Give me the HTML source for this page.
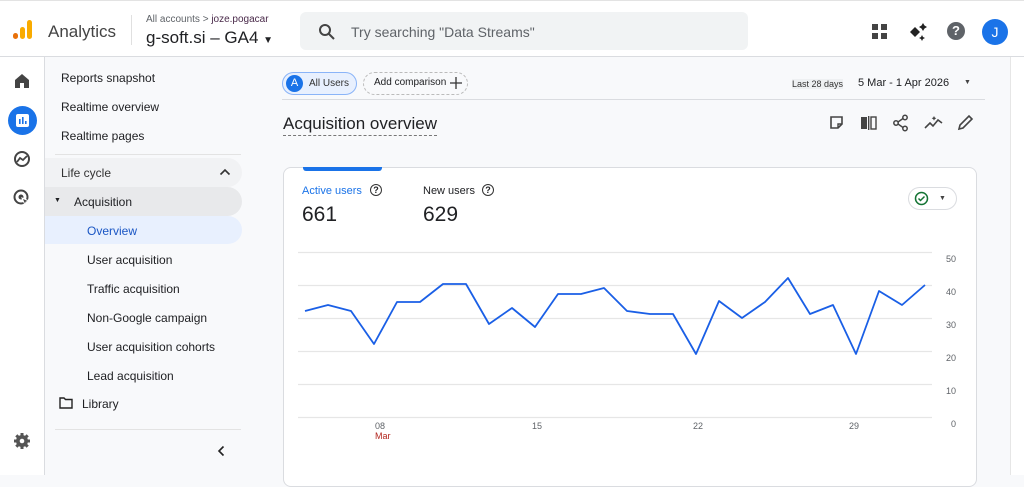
<!DOCTYPE html>
<html><head><meta charset="utf-8"><style>
*{box-sizing:border-box;margin:0;padding:0}
body{width:1024px;height:475px;overflow:hidden;background:#f8f9fb;font-family:"Liberation Sans",Arial,sans-serif;color:#202124;position:relative}
.abs{position:absolute}
#top{left:0;top:0;width:1024px;height:57px;background:#fff;border-top:1px solid #e3e3e3;border-bottom:1px solid #dadce0}
#rail{left:0;top:57px;width:45px;height:418px;background:#fff;border-right:1px solid #dadce0}
.nav{position:absolute;font-size:12px;color:#202124}
.sub{left:87px}
</style></head><body>
<div id="top" class="abs">
  <svg class="abs" style="left:12px;top:18px" width="22" height="24"><rect x="1" y="14" width="5" height="6" rx="2.5" fill="#e8710a"/><rect x="8" y="8" width="5" height="12" rx="2.5" fill="#f9ab00"/><rect x="15" y="1" width="5" height="19" rx="2.5" fill="#f9ab00"/></svg>
  <div class="abs" style="left:48px;top:21px;font-size:17px;color:#444">Analytics</div>
  <div class="abs" style="left:131px;top:14px;width:1px;height:30px;background:#e0e0e0"></div>
  <div class="abs" style="left:146px;top:13px;font-size:10px;color:#5f6368">All accounts &gt; <span style="color:#4a2a4a">joze.pogacar</span></div>
  <div class="abs" style="left:146px;top:27px;font-size:17px;color:#202124">g-soft.si – GA4 <span style="font-size:10px">▼</span></div>
  <div class="abs" style="left:300px;top:11px;width:448px;height:38px;background:#f1f3f4;border-radius:6px"></div>
  <svg class="abs" style="left:318px;top:22px" width="18" height="18"><circle cx="7" cy="7" r="5" fill="none" stroke="#444" stroke-width="2"/><path d="M11 11l5 5" stroke="#444" stroke-width="2"/></svg>
  <div class="abs" style="left:351px;top:23px;font-size:14px;color:#5f6368">Try searching "Data Streams"</div>
  <svg class="abs" style="left:872px;top:23px" width="16" height="16"><rect x="0" y="0" width="6" height="6" fill="#444"/><rect x="9" y="0" width="6" height="6" fill="#444"/><rect x="0" y="9" width="6" height="6" fill="#444"/><rect x="9" y="9" width="6" height="6" fill="#444"/></svg>
  <svg class="abs" style="left:908px;top:21px" width="20" height="20"><path d="M7 5l5 5-5 5-5-5z" fill="#222"/><path d="M15 1l1.5 2.5L19 5l-2.5 1.5L15 9l-1.5-2.5L11 5l2.5-1.5z" fill="#222"/><path d="M14 13l1 2 2 1-2 1-1 2-1-2-2-1 2-1z" fill="#222"/></svg>
  <div class="abs" style="left:947px;top:21px;width:18px;height:18px;border-radius:50%;background:#5f6368;color:#fff;font-size:13px;font-weight:bold;text-align:center;line-height:18px">?</div>
  <div class="abs" style="left:982px;top:18px;width:26px;height:26px;border-radius:50%;background:#1a73e8;color:#fff;font-size:14px;text-align:center;line-height:26px">J</div>
</div>
<div id="rail" class="abs">
  <svg class="abs" style="left:14px;top:16px" width="16" height="16"><path d="M1 7L8 1l7 6v8h-5v-5H6v5H1z" fill="#444"/></svg>
  <div class="abs" style="left:8px;top:49px;width:29px;height:29px;border-radius:50%;background:#1a73e8"></div>
  <svg class="abs" style="left:15px;top:56px" width="15" height="15"><rect x="1" y="1" width="13" height="13" rx="2" fill="#fff"/><rect x="4" y="6" width="1.6" height="5" fill="#1a73e8"/><rect x="7" y="4" width="1.6" height="7" fill="#1a73e8"/><rect x="10" y="8" width="1.6" height="3" fill="#1a73e8"/></svg>
  <svg class="abs" style="left:13px;top:93px" width="18" height="18"><circle cx="9" cy="9" r="7" fill="none" stroke="#444" stroke-width="2"/><path d="M4 12l3-4 3 2 4-4" fill="none" stroke="#444" stroke-width="1.8"/></svg>
  <svg class="abs" style="left:13px;top:132px" width="18" height="18"><circle cx="8" cy="8" r="6.5" fill="none" stroke="#444" stroke-width="2"/><circle cx="8" cy="8" r="2.5" fill="#444"/><path d="M9 9l7 3-3 1-1 3z" fill="#444" stroke="#fff" stroke-width="1"/></svg>
  <svg class="abs" style="left:13px;top:375px" width="18" height="18"><circle cx="9" cy="9" r="6" fill="#555"/><g stroke="#555" stroke-width="3"><path d="M9 1v16M1 9h16M3.3 3.3l11.4 11.4M14.7 3.3L3.3 14.7"/></g><circle cx="9" cy="9" r="2.3" fill="#fff"/></svg>
</div>
<div class="nav" style="left:61px;top:71px">Reports snapshot</div>
<div class="nav" style="left:61px;top:100px">Realtime overview</div>
<div class="nav" style="left:61px;top:129px">Realtime pages</div>
<div class="abs" style="left:55px;top:154px;width:186px;height:1px;background:#e3e3e3"></div>
<div class="abs" style="left:45px;top:158px;width:197px;height:29px;background:#f1f2f4;border-radius:0 15px 15px 0"></div>
<div class="nav" style="left:61px;top:166px;color:#333">Life cycle</div>
<svg class="abs" style="left:219px;top:168px" width="12" height="8"><path d="M1.5 6.5L6 2l4.5 4.5" fill="none" stroke="#333" stroke-width="1.6"/></svg>
<div class="abs" style="left:45px;top:187px;width:197px;height:29px;background:#e8e9eb;border-radius:0 15px 15px 0"></div>
<div class="nav" style="left:54px;top:197px;font-size:7px">▼</div>
<div class="nav" style="left:74px;top:195px">Acquisition</div>
<div class="abs" style="left:45px;top:216px;width:197px;height:28px;background:#e8f0fe;border-radius:0 15px 15px 0"></div>
<div class="nav sub" style="top:224px;color:#1a56c4">Overview</div>
<div class="nav sub" style="top:253px">User acquisition</div>
<div class="nav sub" style="top:282px">Traffic acquisition</div>
<div class="nav sub" style="top:311px">Non-Google campaign</div>
<div class="nav sub" style="top:340px">User acquisition cohorts</div>
<div class="nav sub" style="top:369px">Lead acquisition</div>
<svg class="abs" style="left:59px;top:397px" width="14" height="12"><path d="M1 1h4l1.5 1.5H13V11H1z" fill="none" stroke="#222" stroke-width="1.4"/></svg>
<div class="nav" style="left:82px;top:397px">Library</div>
<div class="abs" style="left:55px;top:429px;width:186px;height:1px;background:#e3e3e3"></div>
<svg class="abs" style="left:217px;top:445px" width="8" height="12"><path d="M6.5 1.5L2 6l4.5 4.5" fill="none" stroke="#222" stroke-width="1.6"/></svg>
<div class="abs" style="left:282px;top:72px;width:75px;height:23px;border:1px solid #8ab4f8;background:#e8f0fe;border-radius:12px"></div>
<div class="abs" style="left:286px;top:75px;width:17px;height:17px;border-radius:50%;background:#1a73e8;color:#fff;font-size:11px;text-align:center;line-height:17px">A</div>
<div class="abs" style="left:309px;top:78px;font-size:10px;color:#333">All Users</div>
<div class="abs" style="left:363px;top:72px;width:105px;height:23px;border:1px dashed #bbb;border-radius:12px"></div>
<div class="abs" style="left:374px;top:77px;font-size:10px;color:#202124">Add comparison</div>
<svg class="abs" style="left:450px;top:77px" width="12" height="12"><path d="M6 0v12M0 6h12" stroke="#333" stroke-width="1.3"/></svg>
<div class="abs" style="left:792px;top:79px;font-size:9px;color:#333;background:#eef0f2">Last 28 days</div>
<div class="abs" style="left:858px;top:77px;font-size:11px;color:#202124">5 Mar - 1 Apr 2026</div>
<div class="abs" style="left:964px;top:79px;font-size:7px;color:#444">▼</div>
<div class="abs" style="left:282px;top:99px;width:703px;height:1px;background:#dadce0"></div>
<div class="abs" style="left:283px;top:114px;font-size:17px;color:#202124;border-bottom:1px dashed #777;padding-bottom:1px">Acquisition overview</div>
<svg class="abs" style="left:828px;top:114px" width="18" height="18"><path d="M3 3h11v7l-4 4H3z" fill="none" stroke="#444" stroke-width="1.6"/><path d="M10 14v-4h4" fill="none" stroke="#444" stroke-width="1.4"/></svg>
<svg class="abs" style="left:860px;top:114px" width="18" height="18"><rect x="1" y="3" width="6" height="12" fill="#444"/><rect x="8" y="2" width="1.4" height="14" fill="#444"/><rect x="11" y="3" width="5" height="12" fill="none" stroke="#444" stroke-width="1.4"/></svg>
<svg class="abs" style="left:892px;top:114px" width="18" height="18"><circle cx="13" cy="3.5" r="2.2" fill="none" stroke="#444" stroke-width="1.5"/><circle cx="4" cy="9" r="2.2" fill="none" stroke="#444" stroke-width="1.5"/><circle cx="13" cy="14.5" r="2.2" fill="none" stroke="#444" stroke-width="1.5"/><path d="M6 8l5-3.5M6 10l5 3.5" stroke="#444" stroke-width="1.4"/></svg>
<svg class="abs" style="left:924px;top:114px" width="20" height="18"><path d="M1 14l5-5 3 3 5-6 4 3" fill="none" stroke="#444" stroke-width="1.6"/><path d="M10 2l.8 1.5 1.5.8-1.5.8L10 6.6l-.8-1.5-1.5-.8 1.5-.8z" fill="#444"/></svg>
<svg class="abs" style="left:956px;top:114px" width="18" height="18"><path d="M3 15l1-4 9-9 3 3-9 9z" fill="none" stroke="#444" stroke-width="1.6"/></svg>
<div class="abs" style="left:283px;top:167px;width:694px;height:320px;background:#fff;border:1px solid #dadce0;border-radius:8px"></div>
<div class="abs" style="left:303px;top:167px;width:79px;height:4px;background:#1a73e8;border-radius:0 0 3px 3px"></div>
<div class="abs" style="left:302px;top:185px;font-size:11px;color:#1a73e8">Active users</div>
<div class="abs" style="left:370px;top:184px;width:12px;height:12px;border:1.3px solid #333;border-radius:50%;font-size:9px;text-align:center;line-height:10px;font-weight:bold">?</div>
<div class="abs" style="left:302px;top:203px;font-size:21px;color:#202124">661</div>
<div class="abs" style="left:423px;top:185px;font-size:11px;color:#202124">New users</div>
<div class="abs" style="left:482px;top:184px;width:12px;height:12px;border:1.3px solid #333;border-radius:50%;font-size:9px;text-align:center;line-height:10px;font-weight:bold">?</div>
<div class="abs" style="left:423px;top:203px;font-size:21px;color:#202124">629</div>
<div class="abs" style="left:908px;top:187px;width:49px;height:23px;border:1px solid #dadce0;border-radius:12px"></div>
<svg class="abs" style="left:914px;top:191px" width="15" height="15"><circle cx="7.5" cy="7.5" r="6" fill="none" stroke="#137333" stroke-width="1.5"/><path d="M4.5 7.5l2 2 4-4" fill="none" stroke="#137333" stroke-width="1.5"/></svg>
<div class="abs" style="left:939px;top:195px;font-size:7px;color:#444">▼</div>
<svg class="abs" style="left:0;top:0" width="1024" height="475">
<g stroke="#e6e6e6" stroke-width="1.3"><path d="M298 252.5H932M298 285.5H932M298 318.5H932M298 351.5H932M298 384.5H932M298 417.5H932"/></g>
<polyline fill="none" stroke="#1a5fe6" stroke-width="1.8" stroke-linejoin="round" points="305,311 328,305 351,311 374,344 397,302 420,302 443,284 466,284 489,324 512,308 535,327 558,294 581,294 604,288 627,311 650,314 673,314 696,354 719,301 742,318 765,302 788,278 810,314 833,305 856,354 879,291 902,305 925,285"/>
<g font-family="Liberation Sans,Arial,sans-serif" font-size="9" fill="#5f6368">
<text x="946" y="262">50</text><text x="946" y="295">40</text><text x="946" y="328">30</text><text x="946" y="361">20</text><text x="946" y="394">10</text><text x="951" y="427">0</text>
<text x="375" y="429">08</text><text x="375" y="439" fill="#b3261e">Mar</text><text x="532" y="429">15</text><text x="693" y="429">22</text><text x="849" y="429">29</text>
</g></svg>
<div class="abs" style="left:1010px;top:57px;width:14px;height:418px;background:#fff;border-left:1px solid #e6e6e6"></div>
</body></html>
